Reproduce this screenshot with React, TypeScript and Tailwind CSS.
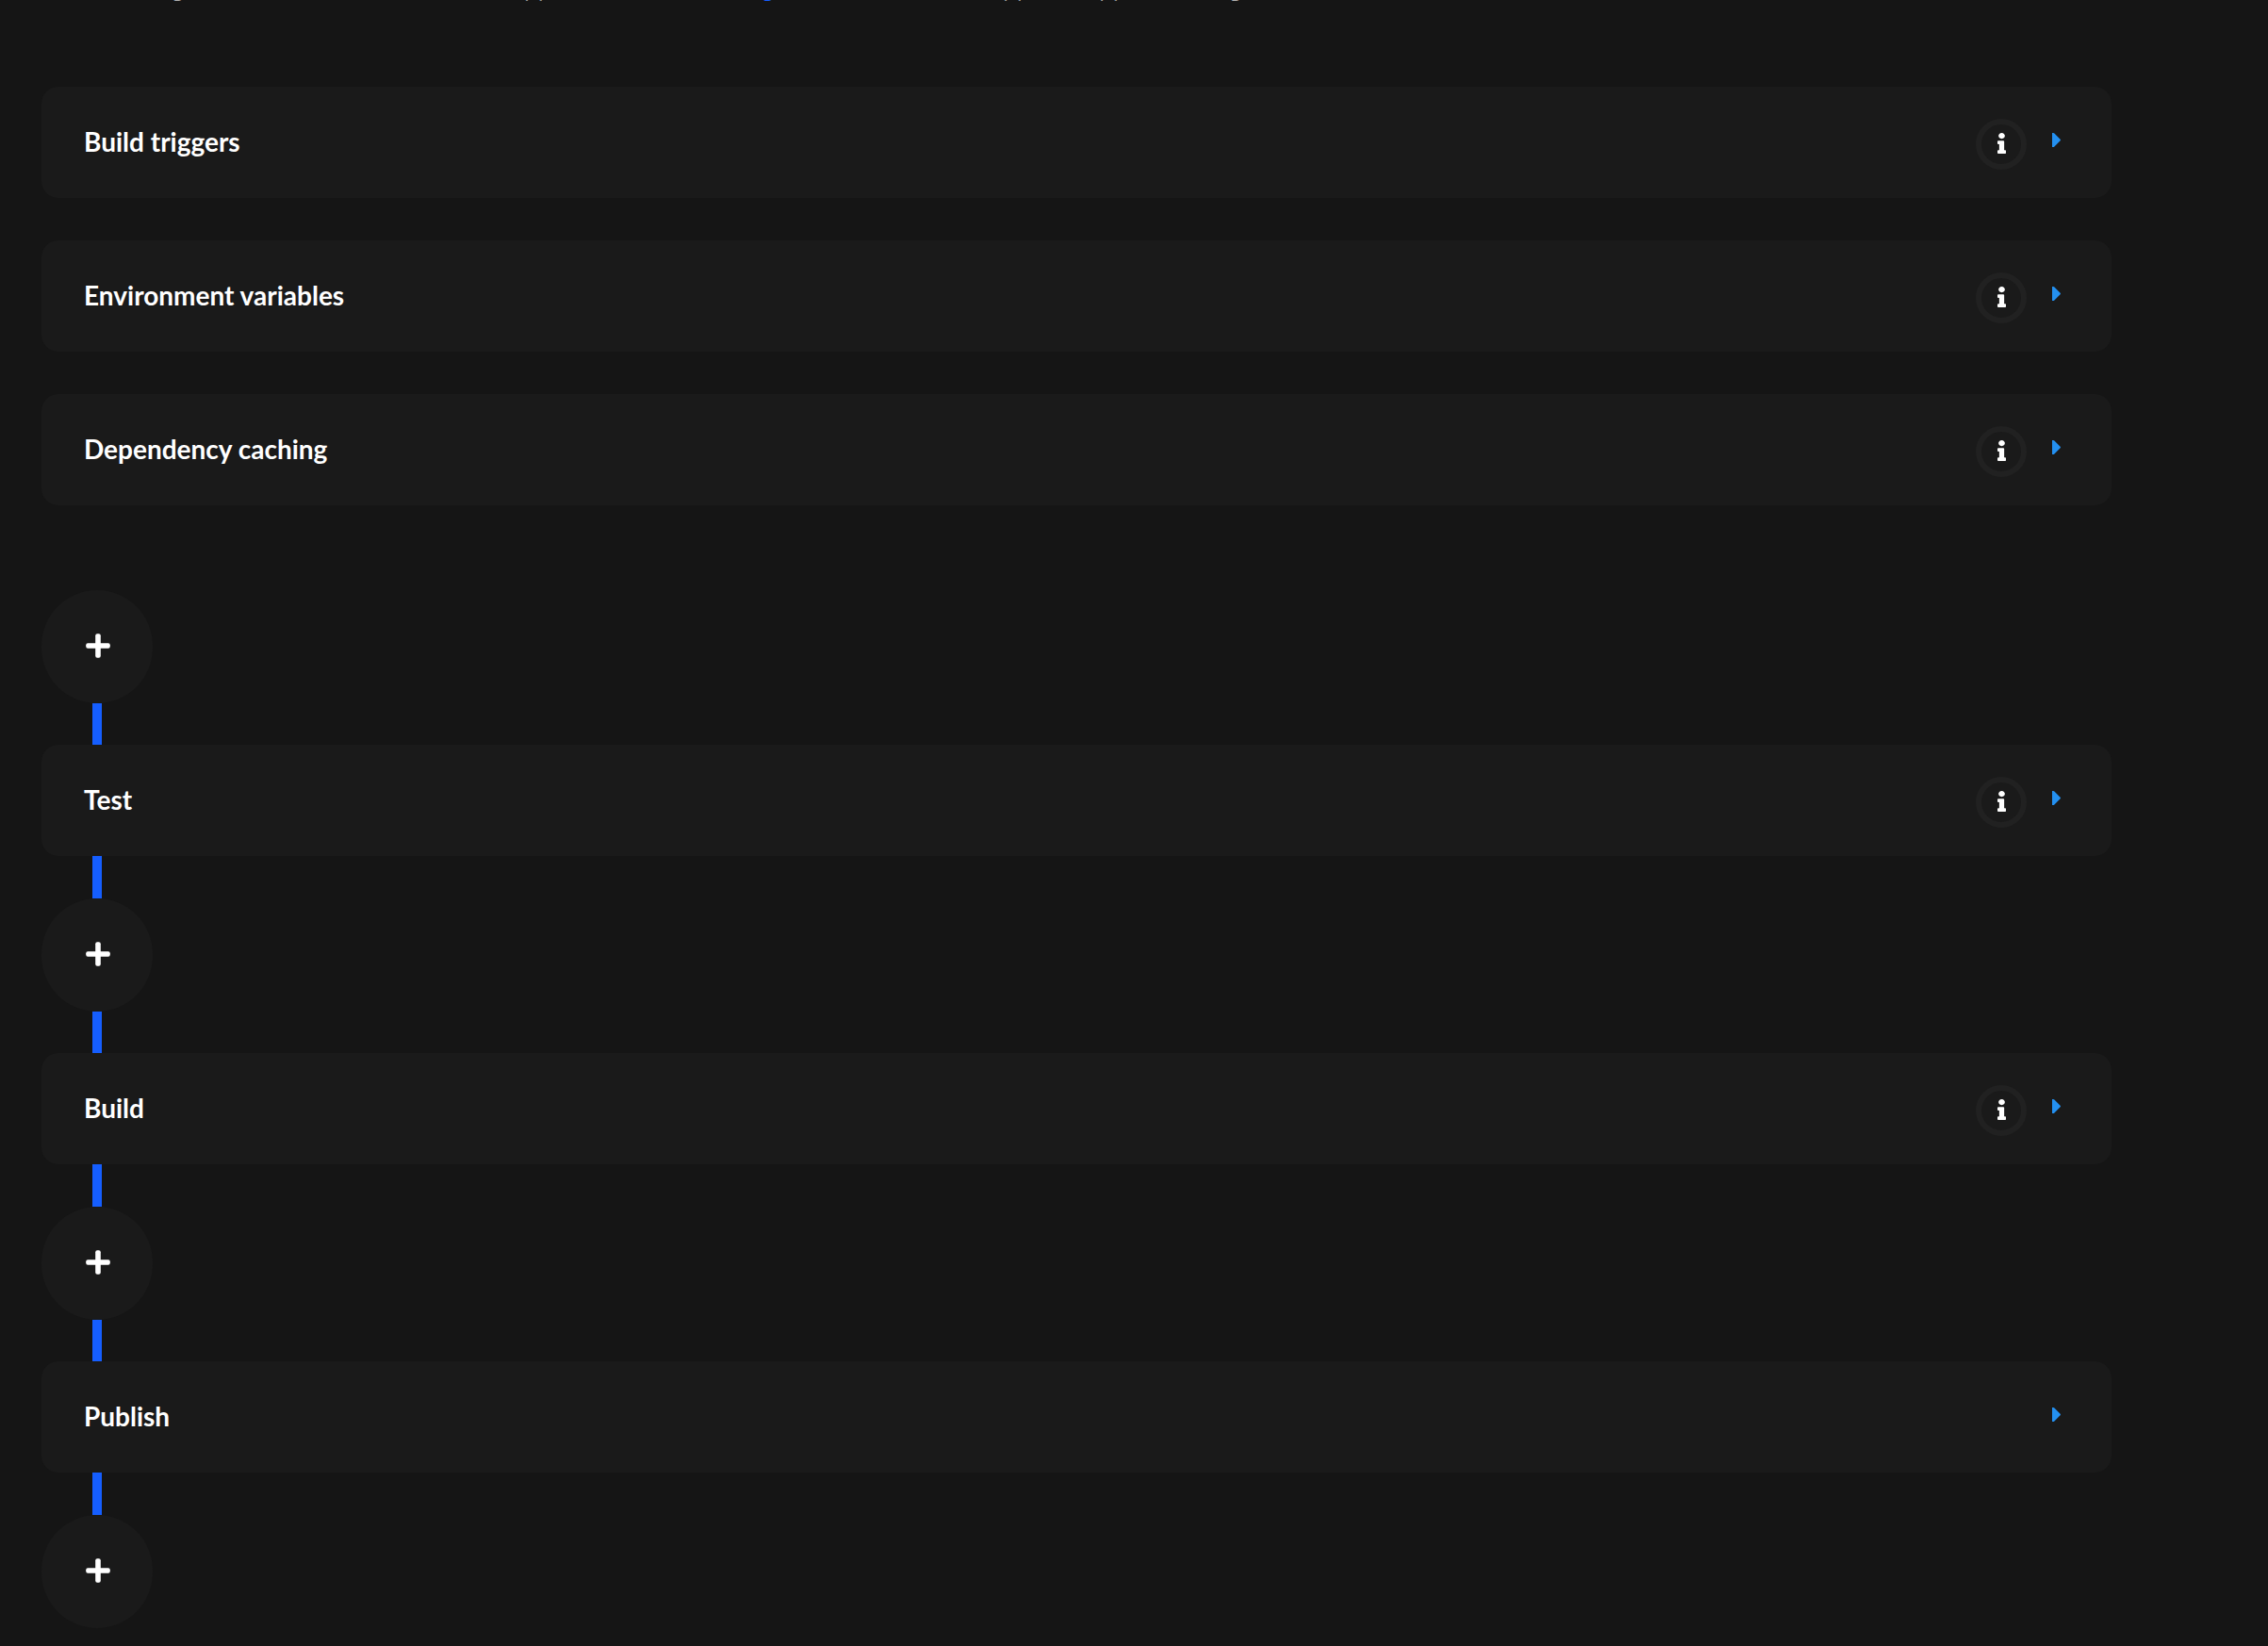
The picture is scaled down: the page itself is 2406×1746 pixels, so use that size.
import React from "react";

function InfoIcon() {
  return (
    <svg viewBox="0 0 192 512" className="h-[22px] w-[9px]" preserveAspectRatio="none" fill="currentColor" aria-hidden="true">
      <path d="M20 424.229h20V279.771H20c-11.046 0-20-8.954-20-20V212c0-11.046 8.954-20 20-20h112c11.046 0 20 8.954 20 20v212.229h20c11.046 0 20 8.954 20 20V492c0 11.046-8.954 20-20 20H20c-11.046 0-20-8.954-20-20v-47.771c0-11.046 8.954-20 20-20zM96 0C56.235 0 24 32.235 24 72s32.235 72 72 72 72-32.235 72-72S135.764 0 96 0z" />
    </svg>
  );
}

function CaretIcon() {
  return (
    <svg viewBox="0 0 9 15" className="h-[15px] w-[9px]" fill="currentColor" aria-hidden="true">
      <path d="M0 0H1.2Q1.9 0 2.4 .5L8.6 6.7Q9.3 7.5 8.6 8.3L2.4 14.5Q1.9 15 1.2 15H0Z" />
    </svg>
  );
}

function PlusIcon() {
  return (
    <svg viewBox="0 0 26 26" className="h-[26px] w-[26px]" fill="currentColor" aria-hidden="true">
      <rect x="10.2" y="0.2" width="5.6" height="25.6" rx="2" />
      <rect x="0.2" y="10.2" width="25.6" height="5.6" rx="2" />
    </svg>
  );
}

function Section({ title, info = true }: { title: string; info?: boolean }) {
  return (
    <section className="flex h-[118px] items-center rounded-[18px] bg-[#1a1a1a] pr-[54px] pl-[45px]">
      <h2 className="flex-1 pb-[2px] text-[28px] leading-9 font-bold text-white">{title}</h2>
      {info && (
        <button
          type="button"
          aria-label={`About ${title}`}
          className="mt-1 mr-[27px] flex size-[54px] items-center justify-center rounded-full border-6 border-[#212121] pb-[2px] text-white"
        >
          <InfoIcon />
        </button>
      )}
      <button type="button" aria-label={`Expand ${title}`} className="mb-[5px] text-[#2490f0]">
        <CaretIcon />
      </button>
    </section>
  );
}

function AddStep() {
  return (
    <button
      type="button"
      aria-label="Add step"
      className="flex h-[120px] w-[118px] items-center justify-center rounded-full bg-[#1a1a1a] pb-[2px] pl-[2px] text-white"
    >
      <PlusIcon />
    </button>
  );
}

function Line({ tall = false }: { tall?: boolean }) {
  return <div className={`ml-[54px] w-[10px] bg-[#155eff] ${tall ? "h-[45px]" : "h-11"}`} />;
}

/* Last visible row of the intro paragraph, scrolled almost out of view. */
function ScrolledIntro() {
  return (
    <p className="grid h-px grid-cols-[375px_251px_257px_102px_137px_auto] content-end overflow-hidden pl-[137px] font-['Inter',sans-serif] text-2xl leading-[26px] text-[#b0b0b0]">
      <span>g</span>
      <span>pp</span>
      <a href="#docs" className="text-[#155eff]">g</a>
      <span>pp</span>
      <span>pp</span>
      <span>g</span>
    </p>
  );
}

export default function App() {
  return (
    <main className="min-h-screen bg-[#151515] pr-[166px] pb-5 pl-11 font-['Lato',sans-serif] text-white">
      <ScrolledIntro />
      <div className="mt-[91px] flex flex-col gap-[45px]">
        <Section title="Build triggers" />
        <Section title="Environment variables" />
        <Section title="Dependency caching" />
      </div>
      <div className="mt-[90px]">
        <AddStep />
        {["Test", "Build", "Publish"].map((title) => (
          <React.Fragment key={title}>
            <Line />
            <Section title={title} info={title !== "Publish"} />
            <Line tall />
            <AddStep />
          </React.Fragment>
        ))}
      </div>
    </main>
  );
}
